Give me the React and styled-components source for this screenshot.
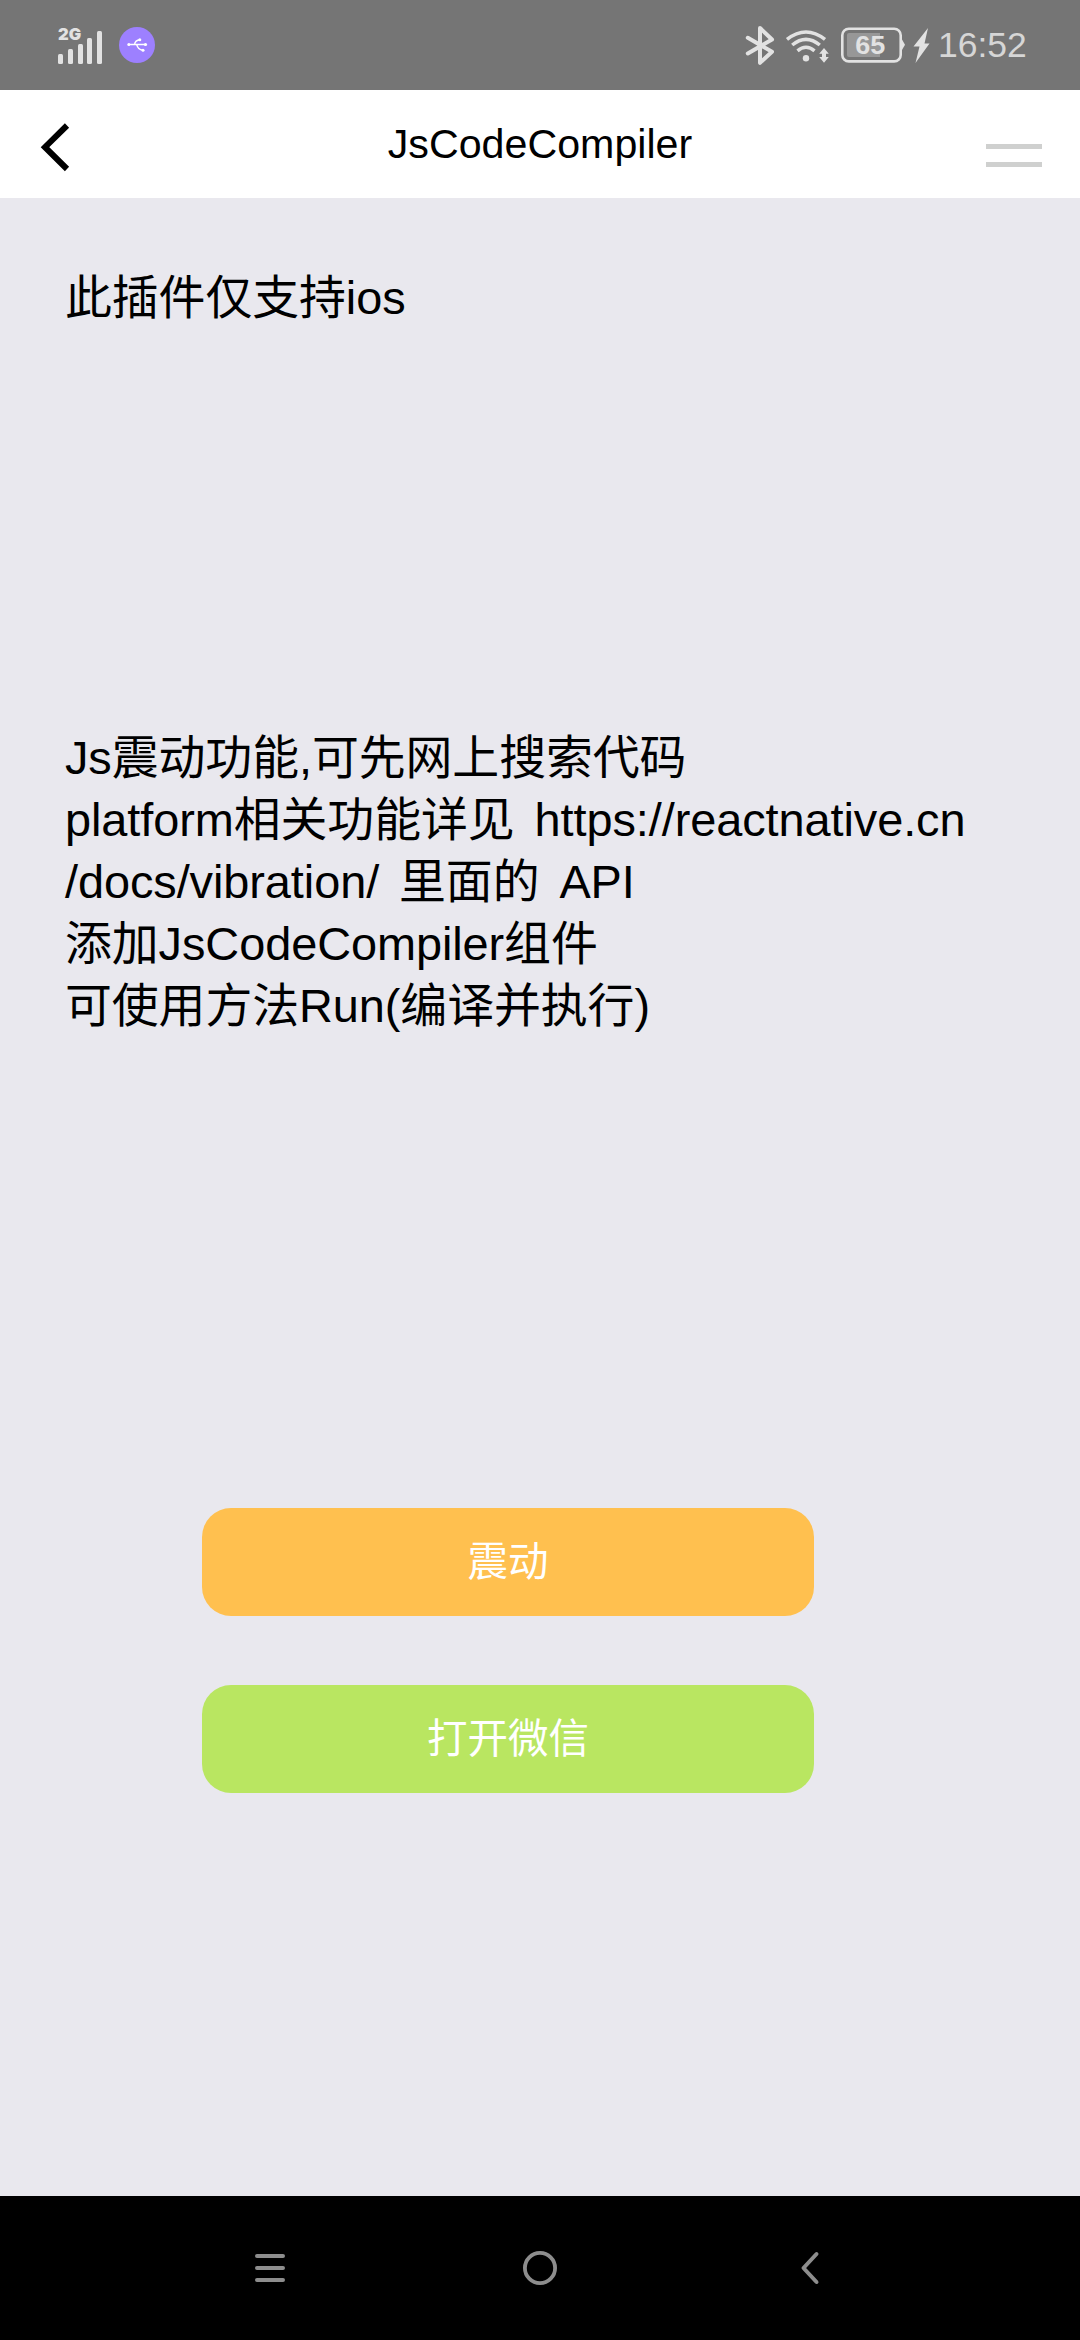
import React from "react";
import styled, { createGlobalStyle } from "styled-components";

const GlobalStyle = createGlobalStyle`
  *, *::before, *::after { box-sizing: border-box; }
  body {
    margin: 0;
    background: #e9e8ee;
    font-family: "Liberation Sans", "Noto Sans CJK SC", sans-serif;
  }
`;

const Screen = styled.div`
  width: 1080px;
  height: 2340px;
  display: flex;
  flex-direction: column;
  background: #e9e8ee;
  overflow: hidden;
`;

const StatusBar = styled.header`
  height: 90px;
  flex: none;
  display: flex;
  justify-content: space-between;
  background: #757575;
`;

const StatusGroup = styled.div`
  display: flex;
  align-items: flex-start;
  padding-left: ${(p) => p.$inset || 0}px;
`;

const Signal = styled.div`
  width: 50px;
  height: 68px;
  padding-top: 24px;
  color: #e2e2e2;
`;

const Network = styled.div`
  height: 0;
  padding-left: 0;
  font-family: Inter, "Liberation Sans", sans-serif;
  font-size: 16.5px;
  line-height: 20px;
  font-weight: 900;
  overflow: visible;
`;

const Bars = styled.div`
  height: 40px;
  display: flex;
  align-items: flex-end;
  gap: 4.8px;
`;

const Bar = styled.span`
  width: 5px;
  height: ${(p) => p.$height}px;
  border-radius: 1.5px;
  background: currentColor;
`;

const UsbBadge = styled.div`
  width: 36px;
  height: 36px;
  margin: 27px 0 0 11px;
  border-radius: 50%;
  background: #9d80ff;
`;

const Icon = styled.svg`
  display: block;
  flex: none;
`;

const Clock = styled.time`
  width: 146px;
  height: 90px;
  padding: 25px 0 0 4px;
  color: #d6d6d6;
  font-size: 35.5px;
  line-height: 41px;
`;

const BatteryText = styled.text`
  font: 700 22px "Liberation Sans", sans-serif;
`;

const TitleBar = styled.nav`
  height: 108px;
  flex: none;
  display: grid;
  grid-template-columns: 120px 1fr 120px;
  background: #fff;
`;

const Title = styled.h1`
  margin: 0;
  padding-top: 31px;
  text-align: center;
  font-size: 41.2px;
  font-weight: 400;
  line-height: 47px;
  color: #000;
`;

const BareButton = styled.button`
  border: 0;
  padding: 0;
  background: none;
  display: flex;
`;

const MenuButton = styled(BareButton)`
  flex-direction: column;
  gap: 13px;
  padding: 54px 0 0 26px;
`;

const MenuLine = styled.span`
  width: 56px;
  height: 5px;
  background: #cfd0cf;
`;

const Content = styled.main`
  flex: 1;
  display: flex;
  flex-direction: column;
  padding: 69px 65px 0;
`;

const Note = styled.p`
  margin: 0 0 ${(p) => p.$after}px;
  color: #000;
  font-size: 46.9px;
  line-height: 62px;
  letter-spacing: -0.08px;
  word-spacing: 7px;
  white-space: nowrap;
`;

const Actions = styled.div`
  width: 612px;
  margin-left: 137px;
  display: flex;
  flex-direction: column;
  gap: 69px;
`;

const ActionButton = styled.button`
  height: 108px;
  border: 0;
  padding: 0;
  border-radius: 29px;
  background: ${(p) => p.$color};
  color: #fff;
  font-family: inherit;
  font-size: 40.5px;
  line-height: 60px;
`;

const NavBar = styled.footer`
  height: 144px;
  flex: none;
  display: flex;
  justify-content: center;
  gap: 162px;
  background: #000;
`;

const lines = [
  "Js震动功能,可先网上搜索代码",
  "platform相关功能详见 https://reactnative.cn",
  "/docs/vibration/ 里面的 API",
  "添加JsCodeCompiler组件",
  "可使用方法Run(编译并执行)",
];

function SignalStatus() {
  return (
    <Signal>
      <Network>2G</Network>
      <Bars>
        {[10, 15, 20, 26, 33].map((h) => (
          <Bar key={h} $height={h} />
        ))}
      </Bars>
    </Signal>
  );
}

function UsbIcon() {
  return (
    <Icon width="36" height="36" viewBox="0 0 36 36" fill="none" stroke="#fff" strokeWidth="1.4">
      <path d="M10 17.5H27M15.5 17.5C16 14 17.5 13 21 12.7M17.5 17.5C19 21 20 23 24 23.3" />
      <circle cx="9.8" cy="17.5" r="1.5" fill="#fff" stroke="none" />
      <circle cx="26.5" cy="17.5" r="1.6" fill="#fff" stroke="none" />
      <circle cx="20.8" cy="12.8" r="1.5" fill="#fff" stroke="none" />
      <circle cx="24" cy="23.3" r="1.5" fill="#fff" stroke="none" />
    </Icon>
  );
}

function SystemIcons() {
  return (
    <Icon width="194" height="90" viewBox="740 0 194 90" fill="none" stroke="#e2e2e2">
      <path d="M747.8 37.8L772 51.8L760 62.8V28L772 39.5L747.8 53.5" strokeWidth="4" strokeLinecap="round" strokeLinejoin="round" />
      <g strokeWidth="3.5">
        <path d="M787 39.4Q806 24.6 825 39.4" />
        <path d="M792.2 45Q806 33.8 819.8 45" />
        <path d="M797.5 50.8Q806 43.8 814.5 50.8" />
      </g>
      <circle cx="806" cy="58.3" r="3.2" fill="#e2e2e2" stroke="none" />
      <path d="M824 48L828.8 53.7H826V57H828.8L824 62.8L819.2 57H822V53.7H819.2Z" fill="#e2e2e2" stroke="none" />
      <rect x="842.3" y="28.8" width="58.4" height="32.6" rx="6.5" strokeWidth="2.6" />
      <path d="M902 39.5L905 44.8L902 50Z" fill="#e2e2e2" stroke="none" />
      <path d="M849 33H880V57H849Q847 57 847 55V35Q847 33 849 33Z" fill="#979797" stroke="none" />
      <BatteryText x="855.3" y="54" textLength="30" lengthAdjust="spacingAndGlyphs" fill="#e2e2e2" stroke="none" transform="translate(0 -8.1) scale(1 1.15)">65</BatteryText>
      <path d="M928 28L913.5 46.5H919.5L915.5 63L929.5 43.5H924.5Z" fill="#e2e2e2" stroke="none" />
    </Icon>
  );
}

export default function App() {
  return (
    <>
      <GlobalStyle />
      <Screen>
        <StatusBar>
          <StatusGroup $inset={58}>
            <SignalStatus />
            <UsbBadge>
              <UsbIcon />
            </UsbBadge>
          </StatusGroup>
          <StatusGroup>
            <SystemIcons />
            <Clock>16:52</Clock>
          </StatusGroup>
        </StatusBar>

        <TitleBar>
          <BareButton aria-label="返回">
            <Icon width="120" height="108" viewBox="0 0 120 108" fill="none" stroke="#000" strokeWidth="6">
              <path d="M67 35.5L45 57.2L67 79" />
            </Icon>
          </BareButton>
          <Title>JsCodeCompiler</Title>
          <MenuButton aria-label="菜单">
            <MenuLine />
            <MenuLine />
          </MenuButton>
        </TitleBar>

        <Content>
          <Note $after={398}>此插件仅支持ios</Note>
          <Note $after={471}>
            {lines.map((line) => (
              <React.Fragment key={line}>
                {line}
                <br />
              </React.Fragment>
            ))}
          </Note>
          <Actions>
            <ActionButton $color="#ffc04f">震动</ActionButton>
            <ActionButton $color="#b9e661">打开微信</ActionButton>
          </Actions>
        </Content>

        <NavBar>
          <Icon width="108" height="144" viewBox="0 0 108 144" stroke="#8d8d8d" strokeWidth="4" strokeLinecap="round">
            <path d="M41 60H67M41 72H67M41 84H67" />
          </Icon>
          <Icon width="108" height="144" viewBox="0 0 108 144" fill="none" stroke="#8d8d8d" strokeWidth="3.8">
            <circle cx="54" cy="72" r="15.1" />
          </Icon>
          <Icon width="108" height="144" viewBox="0 0 108 144" fill="none" stroke="#8d8d8d" strokeWidth="4" strokeLinecap="round" strokeLinejoin="round">
            <path d="M60.5 58L47.5 72L60.5 86" />
          </Icon>
        </NavBar>
      </Screen>
    </>
  );
}
